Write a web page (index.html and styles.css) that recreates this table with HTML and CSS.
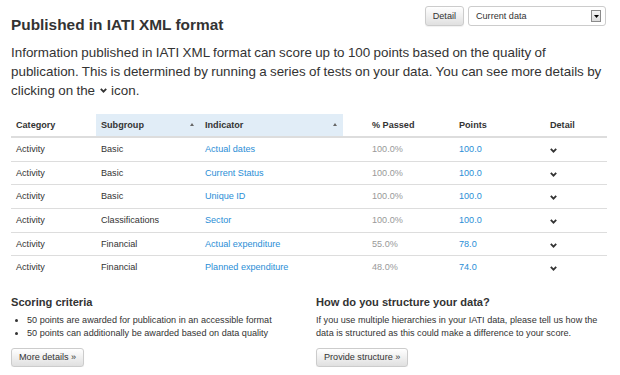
FILE: index.html
```html
<!DOCTYPE html>
<html>
<head>
<meta charset="utf-8">
<link rel="stylesheet" href="styles.css">
</head>
<body>
<div class="page">
  <div class="top">
    <h2 class="title">Published in IATI XML format</h2>
    <div class="controls">
      <button class="btn btn-sm">Detail</button>
      <div class="select"><span class="select-text">Current data</span><span class="select-arrow"><svg width="5" height="3" viewBox="0 0 5 3"><polygon points="0,0 5,0 2.5,3" fill="#000"/></svg></span></div>
    </div>
  </div>
  <p class="lead">Information published in IATI XML format can score up to 100 points based on the quality of publication. This is determined by running a series of tests on your data. You can see more details by clicking on the<span class="chev-wrap"><svg class="chev-inline" width="7" height="5" viewBox="0 0 7 5"><polyline points="0.8,0.8 3.5,3.6 6.2,0.8" fill="none" stroke="#333" stroke-width="1.8"/></svg></span>icon.</p>

  <table class="table">
    <colgroup>
      <col class="c1"><col class="c2"><col class="c3"><col class="c4"><col class="c5"><col class="c6">
    </colgroup>
    <thead>
      <tr>
        <th>Category</th>
        <th class="sorted"><span class="th-in">Subgroup<svg class="sort" width="4" height="3" viewBox="0 0 4 3"><polygon points="0,3 4,3 2,0" fill="#666"/></svg></span></th>
        <th class="sorted"><span class="th-in">Indicator<svg class="sort" width="4" height="3" viewBox="0 0 4 3"><polygon points="0,3 4,3 2,0" fill="#666"/></svg></span></th>
        <th class="pass">% Passed</th>
        <th>Points</th>
        <th>Detail</th>
      </tr>
    </thead>
    <tbody>
      <tr><td>Activity</td><td>Basic</td><td><a href="#">Actual dates</a></td><td class="pass muted">100.0%</td><td><a href="#">100.0</a></td><td><svg class="chev" width="7" height="5" viewBox="0 0 7 5"><polyline points="0.8,0.8 3.5,3.6 6.2,0.8" fill="none" stroke="#333" stroke-width="1.8"/></svg></td></tr>
      <tr><td>Activity</td><td>Basic</td><td><a href="#">Current Status</a></td><td class="pass muted">100.0%</td><td><a href="#">100.0</a></td><td><svg class="chev" width="7" height="5" viewBox="0 0 7 5"><polyline points="0.8,0.8 3.5,3.6 6.2,0.8" fill="none" stroke="#333" stroke-width="1.8"/></svg></td></tr>
      <tr><td>Activity</td><td>Basic</td><td><a href="#">Unique ID</a></td><td class="pass muted">100.0%</td><td><a href="#">100.0</a></td><td><svg class="chev" width="7" height="5" viewBox="0 0 7 5"><polyline points="0.8,0.8 3.5,3.6 6.2,0.8" fill="none" stroke="#333" stroke-width="1.8"/></svg></td></tr>
      <tr><td>Activity</td><td>Classifications</td><td><a href="#">Sector</a></td><td class="pass muted">100.0%</td><td><a href="#">100.0</a></td><td><svg class="chev" width="7" height="5" viewBox="0 0 7 5"><polyline points="0.8,0.8 3.5,3.6 6.2,0.8" fill="none" stroke="#333" stroke-width="1.8"/></svg></td></tr>
      <tr><td>Activity</td><td>Financial</td><td><a href="#">Actual expenditure</a></td><td class="pass muted">55.0%</td><td><a href="#">78.0</a></td><td><svg class="chev" width="7" height="5" viewBox="0 0 7 5"><polyline points="0.8,0.8 3.5,3.6 6.2,0.8" fill="none" stroke="#333" stroke-width="1.8"/></svg></td></tr>
      <tr><td>Activity</td><td>Financial</td><td><a href="#">Planned expenditure</a></td><td class="pass muted">48.0%</td><td><a href="#">74.0</a></td><td><svg class="chev" width="7" height="5" viewBox="0 0 7 5"><polyline points="0.8,0.8 3.5,3.6 6.2,0.8" fill="none" stroke="#333" stroke-width="1.8"/></svg></td></tr>
    </tbody>
  </table>

  <div class="cols">
    <div class="col">
      <h4>Scoring criteria</h4>
      <ul>
        <li>50 points are awarded for publication in an accessible format</li>
        <li>50 points can additionally be awarded based on data quality</li>
      </ul>
      <button class="btn">More details »</button>
    </div>
    <div class="col">
      <h4>How do you structure your data?</h4>
      <p class="small">If you use multiple hierarchies in your IATI data, please tell us how the data is structured as this could make a difference to your score.</p>
      <button class="btn">Provide structure »</button>
    </div>
  </div>
</div>
</body>
</html>
```

FILE: styles.css
```css
* { box-sizing: border-box; }
html, body { margin: 0; padding: 0; background: #fff; }
body {
  font-family: "Liberation Sans", Arial, sans-serif;
  font-size: 9.1px;
  line-height: 13px;
  color: #333;
}
.page {
  padding: 0 13px 0 11px;
}
.top {
  display: flex;
  justify-content: space-between;
  align-items: flex-start;
}
.title {
  margin: 16px 0 0 0;
  font-size: 15.4px;
  line-height: 17px;
  font-weight: bold;
  color: #333;
}
.controls {
  display: flex;
  gap: 4px;
  margin-top: 6px;
  margin-right: 1px;
}
.btn {
  font-family: inherit;
  font-size: 9.1px;
  line-height: 13px;
  color: #333;
  padding: 2px 7px;
  border: 1px solid #ccc;
  border-radius: 3px;
  background: linear-gradient(to bottom, #ffffff 0%, #e0e0e0 100%);
  box-shadow: 0 1px 1px rgba(0,0,0,0.06);
  cursor: pointer;
}
.btn-sm {
  height: 20px;
  padding: 2px 7px;
}
.select {
  width: 138px;
  height: 20px;
  border: 1px solid #ccc;
  border-radius: 3px;
  background: #fff;
  display: flex;
  align-items: center;
  justify-content: space-between;
  padding: 0 4px 0 7px;
}
.select-text { font-size: 9.1px; }
.select-arrow {
  width: 10px;
  height: 12px;
  border: 1px solid #8a8a8a;
  background: linear-gradient(to bottom, #f4f4f4, #dcdcdc);
  display: flex;
  align-items: center;
  justify-content: center;
}
.lead {
  margin: 10px -4px 0 0;
  font-size: 13.4px;
  line-height: 19.2px;
  word-spacing: -0.4px;
  color: #333;
}
.chev-wrap {
  display: inline-block;
  padding: 0 4px 0 5px;
  line-height: 1;
}
.chev-inline { display: block; position: relative; top: -2px; }

.table {
  width: 100%;
  border-collapse: collapse;
  margin-top: 13px;
}
.c1 { width: 85px; }
.c2 { width: 104px; }
.c3 { width: 143px; }
.c4 { width: 111px; }
.c5 { width: 91px; }
.c6 { width: 62px; }
.table th, .table td {
  text-align: left;
  padding: 5px 5px;
  line-height: 12.6px;
  vertical-align: top;
}
.table th {
  font-weight: bold;
  border-bottom: 2px solid #ddd;
  padding-top: 5px;
  padding-bottom: 5px;
}
.table td { border-top: 1px solid #ddd; }
.table tbody tr:first-child td { border-top: 0; }
.table th.sorted { background: #e1edf7; }
.th-in {
  display: flex;
  justify-content: space-between;
  align-items: center;
}
.sort { margin-right: 1px; }
.table .pass { padding-left: 29px; }
.muted { color: #999; }
a { color: #2a8ed6; text-decoration: none; }
.chev { vertical-align: -1px; }

.cols {
  display: grid;
  grid-template-columns: 1fr 1fr;
  column-gap: 14px;
  margin-top: 17px;
}
h4 {
  margin: 0;
  font-size: 11.1px;
  line-height: 12px;
  font-weight: bold;
  color: #333;
}
ul {
  margin: 6px 0 8px 0;
  padding-left: 16px;
}
li { line-height: 13px; }
.small {
  margin: 6px 0 8px 0;
  line-height: 13px;
}
```
